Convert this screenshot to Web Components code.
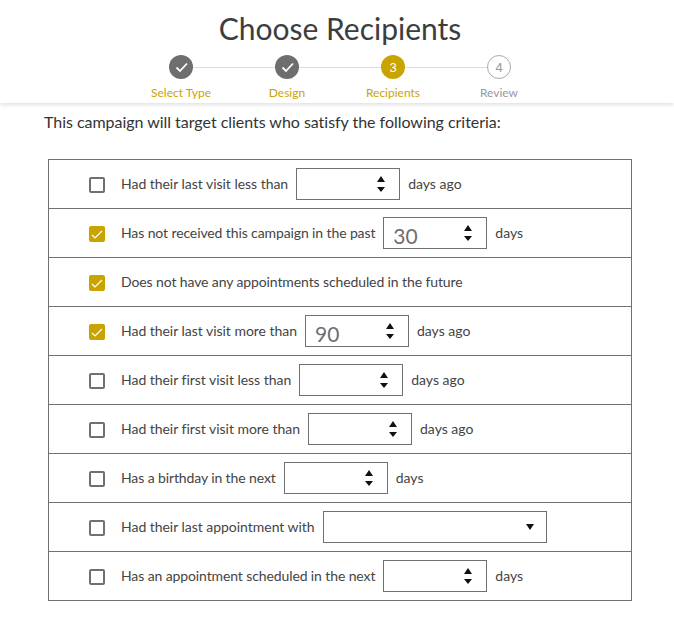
<!DOCTYPE html>
<html>
<head>
<meta charset="utf-8">
<title>Choose Recipients</title>
<style>
    html, body { margin: 0; background: #fff; }
    body { font-family: Lato, sans-serif; color: #333; }
</style>
</head>
<body>
<campaign-header heading="Choose Recipients" current="3" steps="Select Type,Design,Recipients,Review"></campaign-header>
<criteria-list intro="This campaign will target clients who satisfy the following criteria:">
    <criteria-row before="Had their last visit less than" after="days ago"></criteria-row>
    <criteria-row tight checked before="Has not received this campaign in the past" value="30" after="days"></criteria-row>
    <criteria-row tight checked before="Does not have any appointments scheduled in the future" kind="none"></criteria-row>
    <criteria-row checked before="Had their last visit more than" value="90" after="days ago"></criteria-row>
    <criteria-row before="Had their first visit less than" after="days ago"></criteria-row>
    <criteria-row before="Had their first visit more than" after="days ago"></criteria-row>
    <criteria-row tight before="Has a birthday in the next" after="days"></criteria-row>
    <criteria-row before="Had their last appointment with" kind="select"></criteria-row>
    <criteria-row tight before="Has an appointment scheduled in the next" after="days"></criteria-row>
</criteria-list>

<script>
class CampaignHeader extends HTMLElement {
    constructor() {
        super();
        this.attachShadow({ mode: 'open' });
    }

    connectedCallback() {
        const heading = this.getAttribute('heading') || '';
        const current = Number(this.getAttribute('current') || 1);
        const steps = (this.getAttribute('steps') || '').split(',');

        const items = steps.map((label, i) => {
            const n = i + 1;
            const state = n < current ? 'done' : n === current ? 'active' : 'todo';
            const inner = n < current
                ? `<svg width="16" height="16" viewBox="0 0 16 16"><path d="M3.5 8.5 7 12 14 4.5" fill="none" stroke="#fff" stroke-width="1.8"/></svg>`
                : n;
            return `<li class="${state}"><span class="dot">${inner}</span><span class="label">${label}</span></li>`;
        }).join('');

        this.shadowRoot.innerHTML = `
            <style>
                :host {
                    display: block;
                    height: 103px;
                    padding-left: 6px;
                    box-shadow: 0 2px 4px rgba(0, 0, 0, 0.12);
                    text-align: center;
                }
                h1 {
                    margin: 0;
                    padding-top: 8px;
                    font-size: 30px;
                    line-height: 40px;
                    font-weight: 400;
                    color: #3d3d3d;
                }
                ol {
                    list-style: none;
                    display: flex;
                    justify-content: center;
                    margin: 7px 0 0;
                    padding: 0;
                }
                li {
                    position: relative;
                    width: 106px;
                    display: flex;
                    flex-direction: column;
                    align-items: center;
                    gap: 6px;
                    font-size: 12px;
                    line-height: 15px;
                    color: #c9a400;
                }
                li:not(:last-child)::after {
                    content: '';
                    position: absolute;
                    top: 12px;
                    left: 53px;
                    width: 106px;
                    height: 1px;
                    background: #ddd;
                }
                .dot {
                    position: relative;
                    z-index: 1;
                    box-sizing: border-box;
                    width: 24px;
                    height: 24px;
                    border-radius: 50%;
                    display: flex;
                    align-items: center;
                    justify-content: center;
                    font: 13px "Liberation Sans", sans-serif;
                }
                .done .dot { background: #6e6e6e; }
                .active .dot { background: #c9a400; color: #fff; }
                .todo .dot { background: #fff; border: 1px solid #aaa; color: #999; }
                .todo { color: #999; }
            </style>
            <h1>${heading}</h1>
            <ol>${items}</ol>
        `;
    }
}

class CriteriaList extends HTMLElement {
    constructor() {
        super();
        this.attachShadow({ mode: 'open' });
    }

    connectedCallback() {
        this.shadowRoot.innerHTML = `
            <style>
                :host {
                    display: block;
                    padding: 0 42px 28px 48px;
                }
                p {
                    margin: 0 0 0 -4px;
                    padding-top: 9px;
                    font-size: 16px;
                    line-height: 20px;
                    letter-spacing: -0.03px;
                    color: #333;
                }
                .rows {
                    margin-top: 27px;
                    border: 1px solid #707070;
                    border-bottom: 0;
                }
            </style>
            <p>${this.getAttribute('intro') || ''}</p>
            <div class="rows"><slot></slot></div>
        `;
    }
}

class CriteriaRow extends HTMLElement {
    constructor() {
        super();
        this.attachShadow({ mode: 'open' });
    }

    connectedCallback() {
        const kind = this.getAttribute('kind') || 'number';
        const value = this.getAttribute('value') || '';
        const after = this.getAttribute('after');
        const check = this.hasAttribute('checked')
            ? `<svg width="12" height="12" viewBox="0 0 12 12"><path d="M1 7 4 10 11 3" fill="none" stroke="#fff" stroke-width="1.2"/></svg>`
            : '';

        let control = '';
        if (kind === 'number') {
            control = `<span class="field"><span class="value">${value}</span>
                <svg class="spin" width="8" height="16" viewBox="0 0 8 16"><path d="M4 0 8 6H0ZM0 11H8L4 16Z" fill="#111"/></svg></span>`;
        } else if (kind === 'select') {
            control = `<span class="field wide">
                <svg class="caret" width="8" height="6" viewBox="0 0 8 6"><path d="M0 0H8L4 6Z" fill="#111"/></svg></span>`;
        }

        this.shadowRoot.innerHTML = `
            <style>
                :host {
                    display: flex;
                    align-items: center;
                    box-sizing: border-box;
                    height: 49px;
                    padding-left: 40px;
                    border-bottom: 1px solid #707070;
                    font-size: 14px;
                    color: #444;
                }
                .box {
                    box-sizing: border-box;
                    flex: none;
                    width: 16px;
                    height: 16px;
                    margin: 2px 16px 0 0;
                    border: 2px solid #707070;
                    border-radius: 2px;
                    display: flex;
                    align-items: center;
                    justify-content: center;
                }
                .box.on { background: #c9a400; border-color: #c9a400; }
                .text { position: relative; top: -1px; }
                .before { letter-spacing: -0.03px; }
                :host([tight]) .before { letter-spacing: -0.11px; }
                .field {
                    box-sizing: border-box;
                    flex: none;
                    display: flex;
                    align-items: center;
                    justify-content: space-between;
                    width: 104px;
                    height: 32px;
                    margin: 0 8px;
                    padding: 0 14px 0 9px;
                    border: 1px solid #707070;
                    font-size: 21px;
                    color: #6e6e6e;
                }
                .field.wide { width: 224px; justify-content: flex-end; padding-right: 12px; }
                .value { position: relative; top: 2px; }
            </style>
            <span class="box ${check ? 'on' : ''}">${check}</span>
            <span class="text before">${this.getAttribute('before') || ''}</span>
            ${control}
            ${after ? `<span class="text">${after}</span>` : ''}
        `;
    }
}

customElements.define('campaign-header', CampaignHeader);
customElements.define('criteria-list', CriteriaList);
customElements.define('criteria-row', CriteriaRow);
</script>
</body>
</html>
